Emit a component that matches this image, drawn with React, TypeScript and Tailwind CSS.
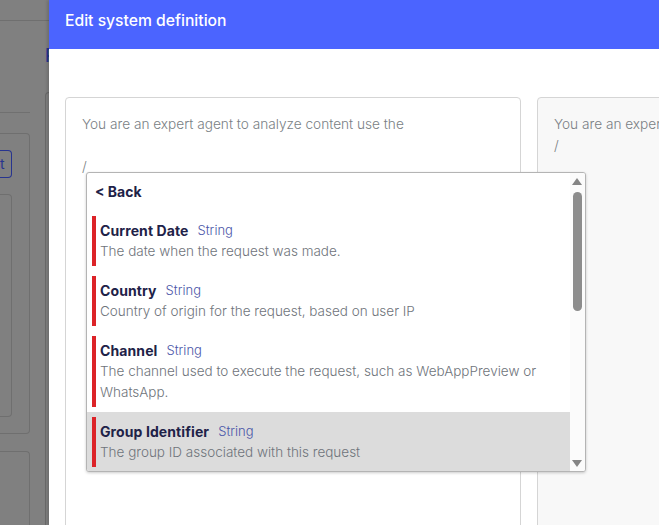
const items = [
  { name: 'Current Date', desc: 'The date when the request was made.' },
  { name: 'Country', desc: 'Country of origin for the request, based on user IP' },
  { name: 'Channel', desc: 'The channel used to execute the request, such as WebAppPreview or WhatsApp.' },
  { name: 'Group Identifier', desc: 'The group ID associated with this request', active: true },
]

function Backdrop() {
  return (
    <aside className="flex w-[49px] shrink-0 flex-col overflow-hidden bg-[#808080]">
      <div className="h-[21px] shrink-0 border-b border-[#6f6f6f]" />
      <div className="flex min-h-0 flex-1">
        <div className="flex w-[30px] shrink-0 flex-col pt-[91px]">
          <div className="h-px w-[30px] bg-[#707070]" />
          <div className="mt-5 flex h-[301px] flex-col rounded-tr rounded-br border-y border-r border-[#6f6f6f] pt-4 pr-[17px] pb-4">
            <div className="h-[28px] w-[12px] rounded-r border-y border-r border-[#27348f] text-left text-sm leading-[26px] text-[#27348f]">
              t
            </div>
            <div className="mt-4 flex-1 rounded-r border-y border-r border-[#6f6f6f]" />
          </div>
          <div className="mt-[17px] flex-1 rounded-tr border-t border-r border-[#6f6f6f]" />
        </div>
        <div className="ml-[15px] flex w-[4px] shrink-0 flex-col">
          <div className="mt-[26px] h-[18px] whitespace-nowrap text-lg leading-[18px] font-medium text-[#27348f]">P</div>
          <div className="mt-[27px] flex-1 rounded-tl border-t border-l border-[#6a6a6a]" />
        </div>
      </div>
    </aside>
  )
}

function Triangle({ down }: { down?: boolean }) {
  return (
    <svg width="10" height="7" viewBox="0 0 10 7" className="shrink-0 fill-[#858585]">
      <path d={down ? 'M0 0h10L5 7z' : 'M5 0l5 7H0z'} />
    </svg>
  )
}

function Suggestions() {
  return (
    <div className="absolute top-[74px] left-[20px] z-10 flex h-[300px] w-[500px] overflow-hidden rounded-[3px] border border-[#b4b4b4] bg-white text-[13.5px] shadow-[0_1px_3px_rgba(0,0,0,0.2)]">
      <div className="w-[483px] shrink-0">
        <div className="flex h-[37px] items-center pl-2 text-sm font-bold text-[#1e2248]">&lt; Back</div>
        <div className="h-px" />
        {items.map((item) => (
          <div key={item.name} className={`py-[5px] pl-[5px] ${item.active ? 'bg-[#dcdcdc]' : ''}`}>
            <div className="border-l-4 border-[#dc2328] py-1 pr-[30px] pl-1">
              <div className="flex items-center gap-[9px]">
                <span className="text-sm font-bold tracking-[0.1px] text-[#1e2248]">{item.name}</span>
                <span className="text-[13px] font-light text-[#4a55a8]">String</span>
              </div>
              <p className="font-light text-[#6f747b]">{item.desc}</p>
            </div>
          </div>
        ))}
      </div>
      <div className="flex flex-1 flex-col items-center bg-[#fbfbfb] pt-[5px] pb-[4px] pr-px">
        <Triangle />
        <div className="mt-[7px] h-[119px] w-[9px] rounded-full bg-[#8c8c8c]" />
        <div className="flex-1" />
        <Triangle down />
      </div>
    </div>
  )
}

export default function App() {
  return (
    <div className="flex h-[525px] w-[659px] overflow-hidden font-['Inter',sans-serif] text-[13.65px] leading-[21px]">
      <Backdrop />
      <main className="z-10 flex min-w-0 flex-1 flex-col bg-white shadow-[-2px_0_3px_rgba(0,0,0,0.15)]">
        <header className="flex h-[49px] shrink-0 items-start bg-[#4b64ff] px-4 pt-[10px] text-[15.7px] leading-[22px] font-medium text-white">
          Edit system definition
        </header>
        <div className="flex gap-4 px-4 pt-12">
          <div className="relative h-[500px] w-[456px] shrink-0 rounded border border-[#d5d5d5] p-4 font-light text-[#7a7f85]">
            <p>You are an expert agent to analyze content use the</p>
            <p className="mt-[21px]">/</p>
            <Suggestions />
          </div>
          <div className="h-[500px] w-[456px] shrink-0 rounded border border-[#d5d5d5] bg-[#f8f8f8] p-4 font-light text-[#7a7f85]">
            <p>You are an expert agent to analyze content use the</p>
            <p>/</p>
          </div>
        </div>
      </main>
    </div>
  )
}
